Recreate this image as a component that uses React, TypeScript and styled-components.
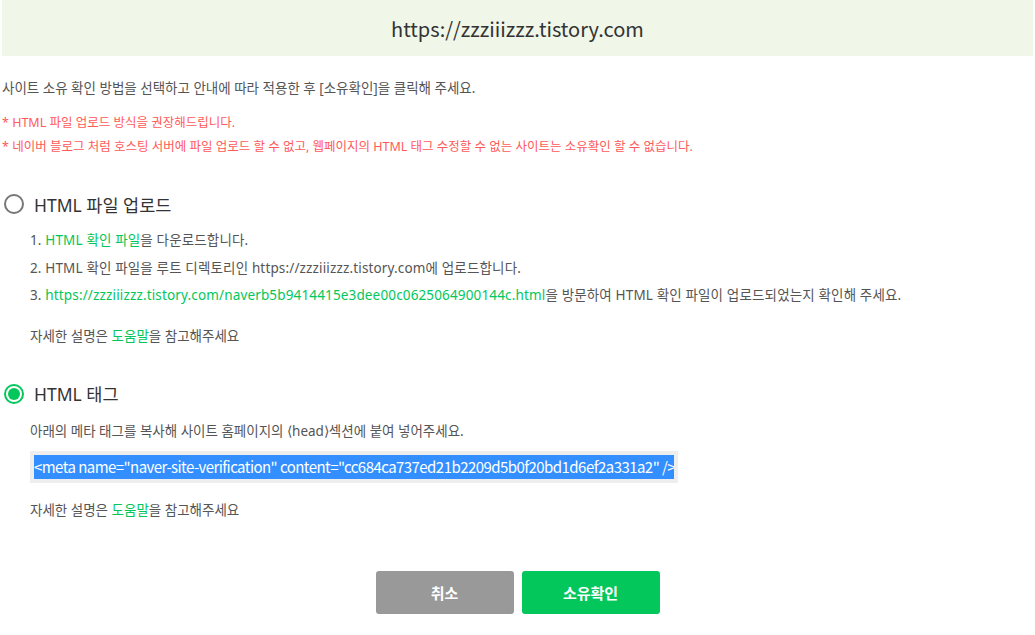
import styled, { createGlobalStyle } from "styled-components";

const GlobalStyle = createGlobalStyle`
    body {
        margin: 0;
        background: #fff;
        font-family: "Noto Sans", "Noto Sans CJK KR", sans-serif;
        color: #555;
    }
`;

const Page = styled.div`
    padding: 0 2px;
`;

const Header = styled.div`
    height: 56px;
    background: #f0f6e8;
    display: flex;
    align-items: center;
    justify-content: center;
    font-family: "Noto Sans CJK KR", sans-serif;
    font-size: 20px;
    color: #333;
`;

const Intro = styled.p`
    margin: 22px 0 0;
    font-size: 13.5px;
    line-height: 20px;
    color: #555;
`;

const Notes = styled.ul`
    list-style: none;
    margin: 13px 0 0;
    padding: 0;
`;

const Note = styled.li`
    font-size: 12.5px;
    line-height: 24px;
    color: #ff5a5a;
`;

const Option = styled.label<{ $top: number }>`
    display: flex;
    align-items: center;
    gap: 10px;
    height: 24px;
    margin-top: ${(p) => p.$top}px;
    padding-left: 2px;
    font-size: 17.5px;
    color: #333;
    cursor: pointer;
`;

const Radio = styled.span<{ $checked?: boolean }>`
    position: relative;
    box-sizing: border-box;
    width: 20px;
    height: 20px;
    border-radius: 50%;
    border: 2px solid ${(p) => (p.$checked ? "#03c75a" : "#777")};

    &::after {
        content: "";
        display: ${(p) => (p.$checked ? "block" : "none")};
        position: absolute;
        inset: 2px;
        border-radius: 50%;
        background: #03c75a;
    }
`;

const Steps = styled.ol`
    list-style: none;
    margin: 11px 0 0;
    padding: 0 0 0 28px;
`;

const Step = styled.li`
    font-size: 13.5px;
    line-height: 27.5px;
    letter-spacing: 0.15px;
    color: #555;
`;

const Green = styled.span`
    color: #03c75a;
`;

const Text = styled.p<{ $top: number }>`
    margin: ${(p) => p.$top}px 0 0;
    padding-left: 28px;
    font-size: 13.5px;
    line-height: 20px;
    color: #555;
`;

const CodeBox = styled.div`
    box-sizing: border-box;
    width: 648px;
    height: 32px;
    margin: 10px 0 0 28px;
    padding: 4px;
    background: #eee;
    display: flex;
`;

const Code = styled.span`
    flex: 1;
    background: #338fff;
    color: #fff;
    font-family: "Noto Sans CJK KR", sans-serif;
    font-size: 15px;
    line-height: 23px;
    letter-spacing: -0.55px;
    white-space: nowrap;
    overflow: hidden;
`;

const Buttons = styled.div`
    display: flex;
    justify-content: center;
    gap: 8px;
    margin-top: 51px;
`;

const Button = styled.button<{ $primary?: boolean }>`
    width: 138px;
    height: 43px;
    border: 0;
    border-radius: 3px;
    background: ${(p) => (p.$primary ? "#03c75a" : "#999")};
    color: #fff;
    font-family: "Noto Sans CJK KR", sans-serif;
    font-size: 15px;
    font-weight: 700;
    cursor: pointer;
`;

const site = "https://zzziiizzz.tistory.com";
const metaTag = `<meta name="naver-site-verification" content="cc684ca737ed21b2209d5b0f20bd1d6ef2a331a2" />`;

const App = () => {
    return (
        <Page>
            <GlobalStyle />
            <Header>{site}</Header>
            <Intro>사이트 소유 확인 방법을 선택하고 안내에 따라 적용한 후 [소유확인]을 클릭해 주세요.</Intro>
            <Notes>
                <Note>* HTML 파일 업로드 방식을 권장해드립니다.</Note>
                <Note>* 네이버 블로그 처럼 호스팅 서버에 파일 업로드 할 수 없고, 웹페이지의 HTML 태그 수정할 수 없는 사이트는 소유확인 할 수 없습니다.</Note>
            </Notes>

            <Option $top={33}>
                <Radio />
                HTML 파일 업로드
            </Option>
            <Steps>
                <Step>1. <Green>HTML 확인 파일</Green>을 다운로드합니다.</Step>
                <Step>2. HTML 확인 파일을 루트 디렉토리인 {site}에 업로드합니다.</Step>
                <Step>
                    3. <Green>{site}/naverb5b9414415e3dee00c0625064900144c.html</Green>을 방문하여 HTML 확인 파일이 업로드되었는지 확인해 주세요.
                </Step>
            </Steps>
            <Text $top={16}>자세한 설명은 <Green>도움말</Green>을 참고해주세요</Text>

            <Option $top={36}>
                <Radio $checked />
                HTML 태그
            </Option>
            <Text $top={15}>아래의 메타 태그를 복사해 사이트 홈페이지의 ⟨head⟩섹션에 붙여 넣어주세요.</Text>
            <CodeBox>
                <Code>{metaTag}</Code>
            </CodeBox>
            <Text $top={17}>자세한 설명은 <Green>도움말</Green>을 참고해주세요</Text>

            <Buttons>
                <Button>취소</Button>
                <Button $primary>소유확인</Button>
            </Buttons>
        </Page>
    );
};

export default App;
